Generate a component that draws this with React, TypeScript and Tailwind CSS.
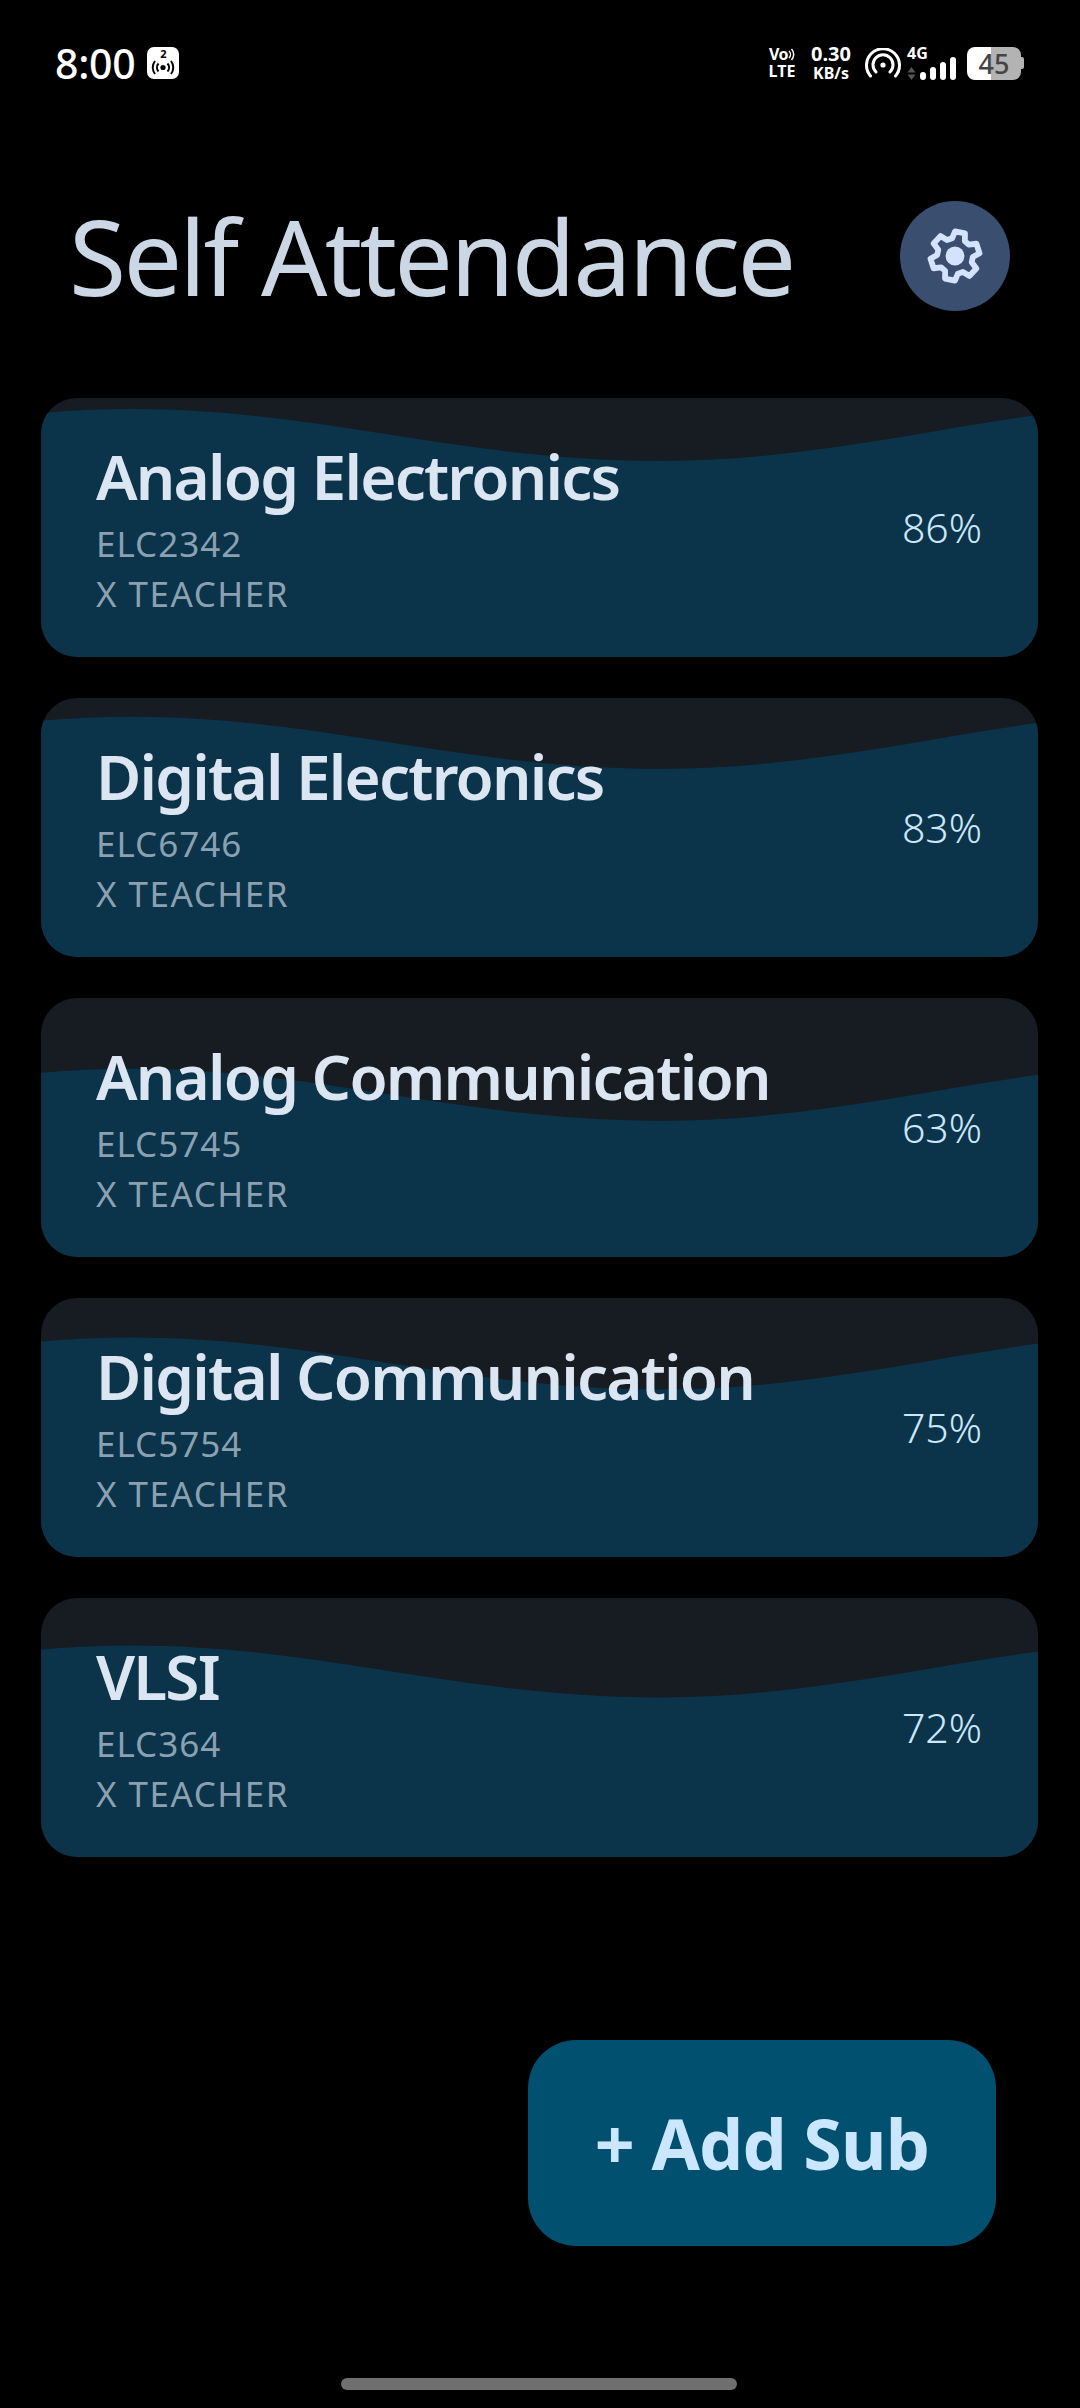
const font = { fontFamily: '"Noto Sans", sans-serif' }

const subjects = [
  { name: 'Analog Electronics', code: 'ELC2342', percent: 86 },
  { name: 'Digital Electronics', code: 'ELC6746', percent: 83 },
  { name: 'Analog Communication', code: 'ELC5745', percent: 63 },
  { name: 'Digital Communication', code: 'ELC5754', percent: 75 },
  { name: 'VLSI', code: 'ELC364', percent: 72 },
]

function wavePath(percent: number) {
  const dy = (86 - percent) * 2.6
  const y = (n: number) => n + dy
  return `M0 ${y(15)} C30 ${y(12.5)} 60 ${y(11)} 92 ${y(11)} C280 ${y(11)} 420 ${y(63)} 620 ${y(63)} C760 ${y(63)} 880 ${y(33)} 998 ${y(17)} L998 259 L0 259 Z`
}

function SubjectCard({ name, code, percent }: { name: string; code: string; percent: number }) {
  return (
    <div className="relative h-[259px] overflow-hidden rounded-[36px] bg-[#161c22]">
      {/* Wave level follows the percentage */}
      <svg className="absolute inset-0 h-full w-full" viewBox="0 0 998 259" preserveAspectRatio="none">
        <path d={wavePath(percent)} fill="#0b3349" />
      </svg>
      <div className="relative flex h-full items-center justify-between pl-[55px] pr-[56px]">
        <div className="flex h-full flex-col pt-[40px]">
          <div className="text-[62px] leading-[76px] font-semibold tracking-[-1.8px] text-[#dbe6f2]">{name}</div>
          <div className="mt-[5px] text-[35px] leading-[50px] tracking-[1px] text-[#8aa1b1]">{code}</div>
          <div className="text-[35px] leading-[50px] tracking-[1.5px] text-[#8aa1b1]">X TEACHER</div>
        </div>
        <div className="text-[41px] leading-none font-light text-[#cbe7fb]">{percent}%</div>
      </div>
    </div>
  )
}

function StatusBar() {
  return (
    <div className="flex h-[86px] items-center justify-between pt-[40px] pl-[55px] pr-[56px] text-white">
      <div className="flex items-center gap-[12px]">
        <span className="text-[41px] leading-[46px] font-medium tracking-[-0.3px]">8:00</span>
        <div className="flex h-[32px] w-[32px] flex-col items-center rounded-[7px] bg-white text-black">
          <span className="mt-[1px] text-[11px] leading-[12px] font-bold">2</span>
          <svg width="26" height="15" viewBox="0 0 26 15" fill="none" stroke="black" strokeWidth="2">
            <circle cx="13" cy="7.5" r="2.6" fill="black" stroke="none" />
            <path d="M8.5 3.5a6 6 0 0 0 0 8M17.5 3.5a6 6 0 0 1 0 8M5 1a10.5 10.5 0 0 0 0 13M21 1a10.5 10.5 0 0 1 0 13" />
          </svg>
        </div>
      </div>
      <div className="flex items-center">
        <div className="flex w-[30px] flex-col items-center text-[16px] leading-[17px] font-bold">
          <span className="flex items-center tracking-[-0.5px]">
            Vo
            <svg width="7" height="13" viewBox="0 0 7 13" fill="none" stroke="white" strokeWidth="1.5">
              <path d="M1 3a5 5 0 0 1 0 7M3.5 1a8 8 0 0 1 0 11" />
            </svg>
          </span>
          <span>LTE</span>
        </div>
        <div className="ml-[12px] flex w-[44px] flex-col items-center font-bold">
          <span className="text-[20px] leading-[21px]">0.30</span>
          <span className="text-[16px] leading-[19px]">KB/s</span>
        </div>
        <svg className="ml-[12px]" width="36" height="30" viewBox="0 0 36 30" fill="none" stroke="white" strokeWidth="3" strokeLinecap="round">
          <circle cx="18" cy="17" r="2.6" fill="white" stroke="none" />
          <path d="M11 24a10 10 0 1 1 14 0M5.5 28a16.5 16.5 0 1 1 25 0" />
        </svg>
        <div className="ml-[6px] flex w-[52px] flex-col">
          <span className="text-[16px] leading-[15px] font-bold">4G</span>
          <div className="-mt-[4px] flex items-end gap-[4px]">
            <svg width="9" height="13" viewBox="0 0 9 13" fill="#555">
              <path d="M4.5 0 8.5 5.5H.5ZM4.5 13 .5 7.5h8Z" />
            </svg>
            <div className="h-[8px] w-[6px] rounded-[3px] bg-white" />
            <div className="h-[13px] w-[6px] rounded-[3px] bg-white" />
            <div className="h-[18px] w-[6px] rounded-[3px] bg-white" />
            <div className="h-[23px] w-[6px] rounded-[3px] bg-white" />
          </div>
        </div>
        <div className="ml-[8px] flex items-center">
          <div className="flex h-[33px] w-[54px] items-center justify-center rounded-[8px] bg-[linear-gradient(90deg,#ffffff_44%,#b3b3b3_44%)] text-[27px] leading-none font-medium text-[#444]">
            45
          </div>
          <div className="h-[12px] w-[3px] rounded-r-[2px] bg-[#b3b3b3]" />
        </div>
      </div>
    </div>
  )
}

function Gear() {
  return (
    <svg width="58" height="58" viewBox="0 0 24 24" fill="none" stroke="#d3e3fd" strokeWidth="2.4" strokeLinejoin="round">
      <path d="M9.9 2h4.2l.6 3.1 1.9 1.1 3-1 2.1 3.6-2.4 2.1v2.2l2.4 2.1-2.1 3.6-3-1-1.9 1.1-.6 3.1H9.9l-.6-3.1-1.9-1.1-3 1-2.1-3.6 2.4-2.1v-2.2L2.3 8.8l2.1-3.6 3 1 1.9-1.1z" transform="rotate(12 12 12)" />
      <circle cx="12" cy="12" r="3.9" fill="#d3e3fd" stroke="none" />
    </svg>
  )
}

export default function App() {
  return (
    <div className="flex h-[2408px] w-[1080px] flex-col overflow-hidden bg-black" style={font}>
      <StatusBar />

      {/* Header */}
      <div className="mt-[115px] flex h-[110px] items-center justify-between pl-[69px] pr-[70px]">
        <h1 className="text-[104px] leading-none font-normal tracking-[-2.7px] text-[#cbd7e4]">Self Attendance</h1>
        <button className="flex h-[110px] w-[110px] items-center justify-center rounded-full bg-[#3a4f6f]">
          <Gear />
        </button>
      </div>

      {/* Subject list */}
      <div className="mt-[87px] flex flex-col gap-[41px] pl-[41px] pr-[42px]">
        {subjects.map((s) => (
          <SubjectCard key={s.code} {...s} />
        ))}
      </div>

      {/* Add button */}
      <div className="mt-[183px] flex justify-end pr-[84px]">
        <button className="flex h-[206px] w-[468px] items-center justify-center rounded-[48px] bg-[#01506f] text-[70px] font-bold tracking-[-0.8px] text-[#cbe6ff]">
          + Add Sub
        </button>
      </div>

      {/* Home indicator */}
      <div className="mt-auto mb-[18px] flex justify-center pr-[2px]">
        <div className="h-[12px] w-[396px] rounded-full bg-[#6f6f6f]" />
      </div>
    </div>
  )
}
